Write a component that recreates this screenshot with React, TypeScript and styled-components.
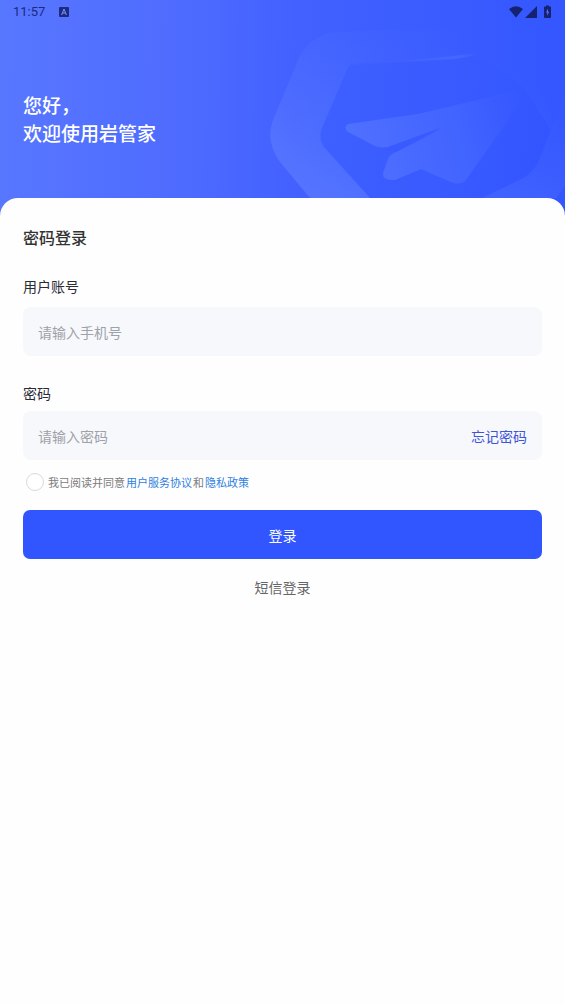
import React, { useState } from 'react';
import styled, { createGlobalStyle } from 'styled-components';

const GlobalStyle = createGlobalStyle`
  *, *::before, *::after { box-sizing: border-box; }
  body {
    margin: 0;
    background: #fefefe;
    font-family: "Noto Sans CJK SC", "Noto Sans", sans-serif;
  }
  button, input { font: inherit; }
`;

const Page = styled.div`
  min-height: 100vh;
  display: flex;
  flex-direction: column;
`;

const Hero = styled.header`
  position: relative;
  height: 220px;
  background: linear-gradient(91deg, #5877ff 0%, #4d6aff 35%, #4261ff 52%, #3c5dff 72%, #3356ff 100%);
  overflow: hidden;
`;

const HeroArt = styled.svg`
  position: absolute;
  top: 0;
  right: 0;
`;

const StatusBar = styled.div`
  position: relative;
  display: flex;
  align-items: center;
  height: 24px;
  padding: 0 13px;
  color: #1c2a80;
`;

const Clock = styled.time`
  font-family: Roboto, sans-serif;
  font-size: 13px;
  line-height: 24px;
  margin-right: 14px;
`;

const StatusIcons = styled.div`
  display: flex;
  margin-left: auto;
`;

const Greeting = styled.h1`
  position: relative;
  margin: 67px 23px 0;
  color: #fff;
  font-size: 19px;
  font-weight: 500;
  line-height: 28px;
`;

const Sheet = styled.main`
  position: relative;
  flex: 1;
  margin-top: -22px;
  padding: 27px 23px;
  border-radius: 18px 18px 0 0;
  background: #fefefe;
`;

const Title = styled.h2`
  margin: 0 0 24px;
  color: #333;
  font-size: 16px;
  font-weight: 500;
  line-height: 24px;
`;

const Label = styled.label<{ $gap: number }>`
  display: block;
  margin-bottom: ${(p) => p.$gap}px;
  color: #2b2b36;
  font-size: 14px;
  line-height: 26px;
`;

const Field = styled.div<{ $gap: number }>`
  display: flex;
  align-items: center;
  height: 49px;
  margin-bottom: ${(p) => p.$gap}px;
  padding: 0 15px;
  border-radius: 8px;
  background: #f6f8fc;
`;

const TextInput = styled.input`
  flex: 1;
  min-width: 0;
  height: 100%;
  padding: 0;
  border: 0;
  outline: 0;
  background: transparent;
  color: #23232b;
  font-size: 14px;
  &::placeholder { color: #9fa1a8; opacity: 1; }
`;

const TextButton = styled.button<{ $color: string }>`
  padding: 0;
  border: 0;
  background: none;
  color: ${(p) => p.$color};
  font-size: 14px;
  line-height: 24px;
  cursor: pointer;
`;

const Agreement = styled.div`
  display: flex;
  align-items: center;
  gap: 4px;
  height: 22px;
  margin: 0 0 17px 3px;
  color: #7c7c7c;
  font-size: 11px;
  line-height: 22px;
`;

const Radio = styled.input`
  appearance: none;
  width: 18px;
  height: 18px;
  margin: 0;
  border: 1px solid #dadada;
  border-radius: 50%;
  background: #fff;
  &:checked { border: 5px solid #3156ff; }
`;

const Link = styled.a`
  margin: 0 1px;
  color: #2e7fe0;
  text-decoration: none;
`;

const Submit = styled.button`
  display: block;
  width: 100%;
  height: 49px;
  margin-bottom: 16px;
  border: 0;
  border-radius: 7px;
  background: #3156ff;
  color: #fff;
  font-size: 14px;
  cursor: pointer;
`;

const Center = styled.div`
  display: flex;
  justify-content: center;
`;

function Plane() {
  return (
    <HeroArt width="305" height="220" viewBox="0 0 305 220" aria-hidden="true">
      <defs>
        <linearGradient id="ring" x1="0" y1="0.8" x2="0.75" y2="0.1">
          <stop offset="0" stopColor="#5c7cff" stopOpacity="0.7" />
          <stop offset="0.35" stopColor="#5474ff" stopOpacity="0.5" />
          <stop offset="1" stopColor="#4668ff" stopOpacity="0" />
        </linearGradient>
        <linearGradient id="core" gradientUnits="userSpaceOnUse" x1="60" y1="100" x2="290" y2="130">
          <stop offset="0" stopColor="#3e60ff" />
          <stop offset="0.6" stopColor="#385aff" />
          <stop offset="1" stopColor="#3355ff" />
        </linearGradient>
        <linearGradient id="rim" gradientUnits="userSpaceOnUse" x1="250" y1="200" x2="300" y2="90">
          <stop offset="0" stopColor="#4062ff" />
          <stop offset="1" stopColor="#3a5cff" stopOpacity="0" />
        </linearGradient>
        <linearGradient id="plane" gradientUnits="userSpaceOnUse" x1="90" y1="150" x2="265" y2="95">
          <stop offset="0" stopColor="#5070ff" />
          <stop offset="0.55" stopColor="#4365ff" />
          <stop offset="0.8" stopColor="#3d5fff" stopOpacity="0.8" />
          <stop offset="1" stopColor="#385aff" stopOpacity="0" />
        </linearGradient>
        <linearGradient id="edge" x1="0" y1="0" x2="1" y2="0">
          <stop offset="0" stopColor="#4969ff" stopOpacity="0.2" />
          <stop offset="0.85" stopColor="#4666ff" />
          <stop offset="1" stopColor="#4666ff" stopOpacity="0" />
        </linearGradient>
      </defs>
      <path
        d="M50 198 L20 162 Q5 141 13 120 L39 58 Q50 35 76 32 L190 27 Q222 27 240 47 L284 98 Q297 116 288 139 L276 164 Q270 177 254 183 L222 198 Z"
        fill="url(#ring)"
      />
      <path d="M305 90 L291 130 L279 160 Q273 175 255 182 L222 198 H296 L305 186 Z" fill="url(#rim)" />
      <path
        d="M91 64 L200 56 Q218 54 233 64 L264 88 L291 130 L279 160 Q273 175 255 182 L222 198 H110 L64 147 Q58 138 62 128 L86 72 Q88 66 91 64 Z"
        fill="url(#core)"
      />
      <path d="M91 64 Q150 61 220 53 Q206 59 180 60 Q135 62 91 65 Z" fill="url(#edge)" />
      <path
        d="M88 124 L158 114 L250 92 L264 96 L242 129 L206 180 Q201 185 193 183 L161 169 L135 180 Q122 181 123 173 L128 159 Q130 154 138 151 L180 128 L128 147 Q119 149 113 145 L88 132 Q83 127 88 124 Z"
        fill="url(#plane)"
      />
      <path d="M114 146 Q121 149 129 147 L181 128 L164 138 L136 152 Q126 150 114 146 Z" fill="#385aff" opacity="0.75" />
    </HeroArt>
  );
}

export default function App() {
  const [agreed, setAgreed] = useState(false);
  return (
    <>
      <GlobalStyle />
      <Page>
        <Hero>
          <Plane />
          <StatusBar>
            <Clock>11:57</Clock>
            <svg width="10" height="10" viewBox="0 0 10 10" aria-hidden="true">
              <rect width="10" height="10" rx="1" fill="#1c2a80" />
              <path d="M2.6 8 L5 2 L7.4 8 M3.5 6 H6.5" fill="none" stroke="#7e92ff" strokeWidth="1" />
            </svg>
            <StatusIcons>
              <svg width="43" height="14" viewBox="0 0 43 14" aria-hidden="true" fill="#14226f">
                <path d="M0 4 Q7 -1.5 14 4 L7 12.5 Z" />
                <path d="M28 1 V13 H16 Z" />
                <path d="M37 1.5 V0.5 H40 V1.5 H41 Q42 1.5 42 2.5 V12 Q42 13 41 13 H36 Q35 13 35 12 V2.5 Q35 1.5 36 1.5 Z" />
                <path d="M39 3.5 L37 7.5 H38.2 V10.8 L40.2 6.8 H39 Z" fill="#5370ff" />
              </svg>
            </StatusIcons>
          </StatusBar>
          <Greeting>
            您好，
            <br />
            欢迎使用岩管家
          </Greeting>
        </Hero>
        <Sheet>
          <Title>密码登录</Title>
          <form onSubmit={(e) => e.preventDefault()}>
            <Label htmlFor="account" $gap={8}>用户账号</Label>
            <Field $gap={24}>
              <TextInput id="account" type="tel" placeholder="请输入手机号" />
            </Field>
            <Label htmlFor="password" $gap={5}>密码</Label>
            <Field $gap={11}>
              <TextInput id="password" type="password" placeholder="请输入密码" />
              <TextButton type="button" $color="#3f55d6">忘记密码</TextButton>
            </Field>
            <Agreement>
              <Radio
                id="agree"
                type="radio"
                checked={agreed}
                onClick={() => setAgreed(!agreed)}
                onChange={() => undefined}
              />
              <span>
                <label htmlFor="agree">我已阅读并同意</label>
                <Link href="#terms">用户服务协议</Link>
                和
                <Link href="#privacy">隐私政策</Link>
              </span>
            </Agreement>
            <Submit type="submit">登录</Submit>
            <Center>
              <TextButton type="button" $color="#666">短信登录</TextButton>
            </Center>
          </form>
        </Sheet>
      </Page>
    </>
  );
}
